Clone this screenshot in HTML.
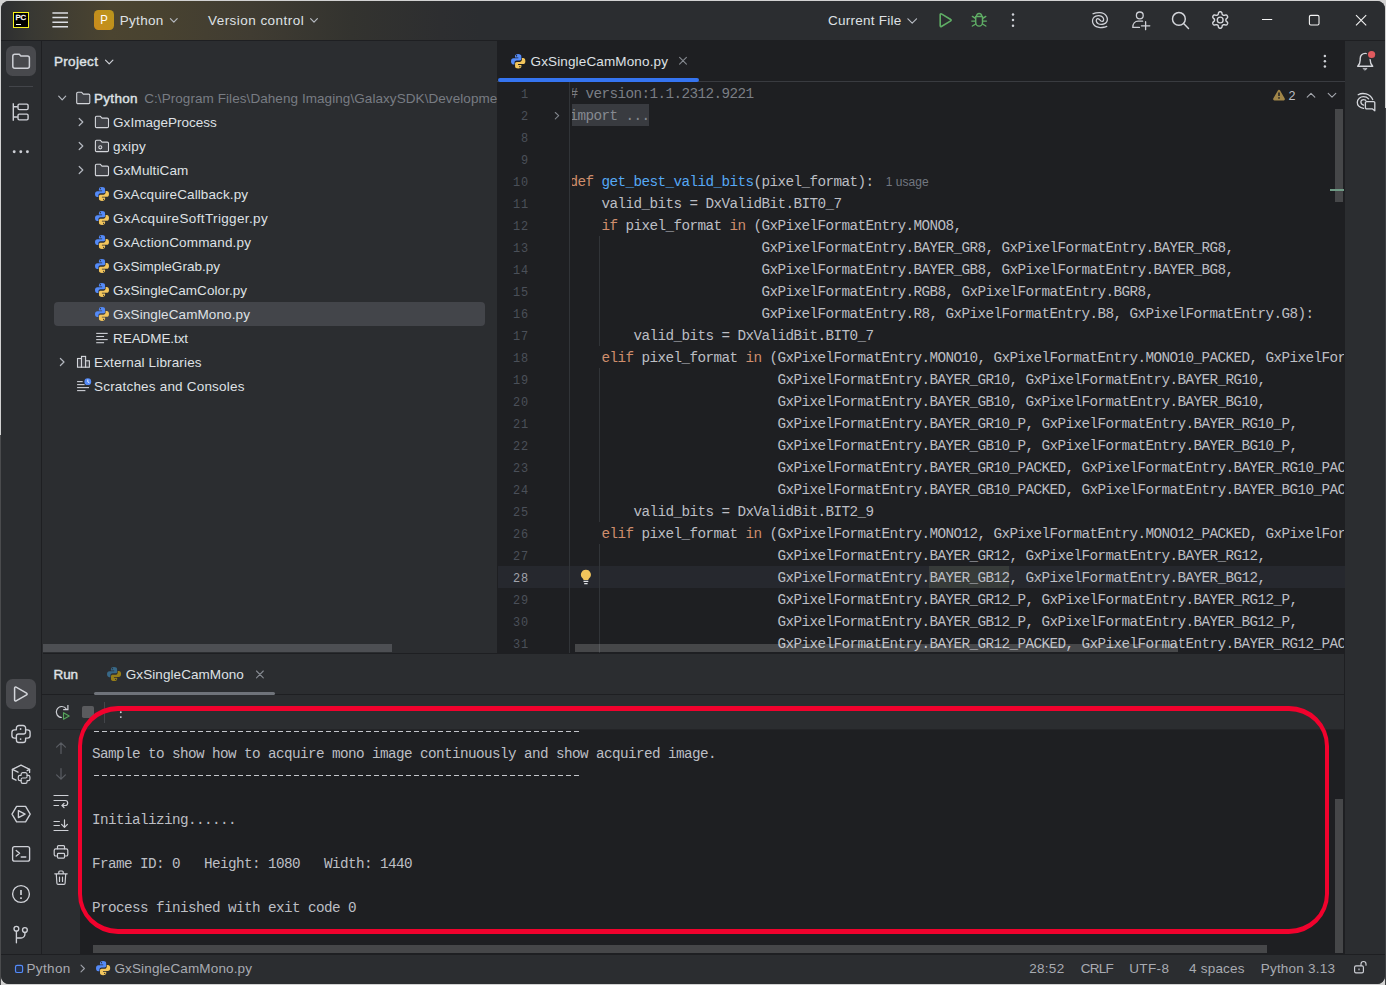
<!DOCTYPE html>
<html><head><meta charset="utf-8">
<style>
*{box-sizing:border-box;margin:0;padding:0}
html,body{width:1386px;height:985px;overflow:hidden;background:#d2d2d2;font-family:"Liberation Sans",sans-serif;}
#win{position:absolute;left:1px;top:1px;width:1384px;height:983px;background:#2b2d30;border-radius:8px;overflow:hidden;}
#win div,#win svg{position:absolute}
.t{color:#dfe1e5;font-size:13.5px;white-space:pre;line-height:16px;height:16px}
.ln{font-family:"Liberation Mono",monospace;font-size:14.3px;letter-spacing:-0.58px;white-space:pre;line-height:22px;height:22px;color:#bcbec4;left:0}
.ln span{position:static}
.k{color:#cf8e6d}.f{color:#56a8f5}.c{color:#7a7e85}
.num{font-family:"Liberation Mono",monospace;font-size:13.2px;letter-spacing:0.97px;line-height:22px;height:22px;color:#4b5059;text-align:right;width:40px;left:487.7px;transform:scaleX(0.9);transform-origin:right center}
svg{overflow:visible;fill:none;stroke:#ced0d6;stroke-width:1.2;stroke-linecap:round;stroke-linejoin:round}
.py .b{fill:#548af7;stroke:none}.py .y{fill:#f2c55c;stroke:none}
</style></head><body>
<div style="position:absolute;left:1385px;top:108px;width:1px;height:877px;background:#3e4043"></div>
<div style="position:absolute;left:0;top:435px;width:1px;height:550px;background:#4a4b4d"></div>
<div id="win">
<!-- TITLEBAR -->
<div style="left:0;top:0;width:1384px;height:39px;background:linear-gradient(90deg,#2d2e30 0px,#383833 30px,#403d32 60px,#4b4430 110px,#484230 160px,#403c32 250px,#33332f 350px,#2d2e30 440px,#2b2d30 480px)"></div>
<div style="left:0;top:39px;width:1384px;height:1px;background:#1e1f22"></div>
<div style="left:12px;top:11px;width:16.4px;height:16.4px;background:#000;border:1.2px solid #f7f21a"></div>
<div style="left:14.6px;top:13.2px;font-size:7.8px;font-weight:400;-webkit-text-stroke:0.35px #fff;color:#fff;line-height:8px;letter-spacing:-0.2px">PC</div>
<div style="left:15px;top:23px;width:5.2px;height:1.1px;background:#fff"></div>
<svg style="left:0;top:0;width:1px;height:1px" viewBox="1 1 1 1"><line x1="52.4" x2="68" y1="12.9" y2="12.9" stroke="#dcdee3" stroke-width="1.500" stroke-linecap="butt"/><line x1="52.4" x2="68" y1="17.5" y2="17.5" stroke="#dcdee3" stroke-width="1.500" stroke-linecap="butt"/><line x1="52.4" x2="68" y1="22.2" y2="22.2" stroke="#dcdee3" stroke-width="1.500" stroke-linecap="butt"/><line x1="52.4" x2="68" y1="26.8" y2="26.8" stroke="#dcdee3" stroke-width="1.500" stroke-linecap="butt"/></svg>
<div style="left:93px;top:9px;width:20px;height:20px;border-radius:4.5px;background:linear-gradient(50deg,#cb8b1c,#b9951c)"></div>
<div style="left:93px;top:9px;width:20px;height:20px;line-height:20.6px;text-align:center;font-size:13.2px;color:#fff;transform:scaleX(0.86)">P</div>
<svg style="left:0;top:0;width:1px;height:1px" viewBox="1 1 1 1"><polyline points="170.4,18.599999999999998 173.8,22.2 177.20000000000002,18.599999999999998" stroke="#b4b8bf" stroke-width="1.2"/></svg>
<svg style="left:0;top:0;width:1px;height:1px" viewBox="1 1 1 1"><polyline points="310.6,18.599999999999998 314,22.2 317.4,18.599999999999998" stroke="#b4b8bf" stroke-width="1.2"/></svg>
<svg style="left:0;top:0;width:1px;height:1px" viewBox="1 1 1 1"><polyline points="907.9000000000001,18.8 912.2,23.2 916.5,18.8" stroke="#b4b8bf" stroke-width="1.2"/></svg>
<svg style="left:0;top:0;width:1px;height:1px" viewBox="1 1 1 1"><path d="M940.2 14.6 v11.2 a0.8 0.8 0 0 0 1.2 0.7 l9.3 -5.6 a0.8 0.8 0 0 0 0 -1.4 l-9.3 -5.6 a0.8 0.8 0 0 0 -1.2 0.7 z" stroke="#5fad65" stroke-width="1.600"/></svg>
<svg style="left:0;top:0;width:1px;height:1px" viewBox="1 1 1 1"><g stroke="#5fad65" stroke-width="1.450"><path d="M976.500 16.300 a2.600 2.800 0 0 1 5.200 0"/><path d="M975.700 16.400 h6.800 v6.300 a3.400 3.400 0 0 1 -6.800 0 z"/><path d="M975.400 18.300 l-3 -1.900 M975.400 21.100 h-3.600 M975.700 24 l-3.300 2 M982.800 18.300 l3 -1.900 M982.800 21.100 h3.600 M982.500 24 l3.300 2"/></g></svg>
<svg style="left:0;top:0;width:1px;height:1px" viewBox="1 1 1 1"><circle cx="1013" cy="14.5" r="1.25" fill="#ced0d6" stroke="none"/><circle cx="1013" cy="20.1" r="1.25" fill="#ced0d6" stroke="none"/><circle cx="1013" cy="25.7" r="1.25" fill="#ced0d6" stroke="none"/></svg>
<svg style="left:0;top:0;width:1px;height:1px" viewBox="1 1 1 1"><path d="M1093.12 13.73 C1093.60 13.58 1094.94 13.06 1096.04 12.87 C1097.14 12.68 1098.44 12.48 1099.70 12.58 C1100.95 12.68 1102.50 12.95 1103.59 13.48 C1104.69 14.02 1105.65 14.88 1106.27 15.80 C1106.90 16.71 1107.33 17.91 1107.37 18.96 C1107.41 20.02 1107.07 21.30 1106.52 22.13 C1105.97 22.97 1104.98 23.57 1104.08 23.96 C1103.19 24.35 1102.13 24.49 1101.16 24.45 C1100.18 24.41 1099.01 24.14 1098.23 23.72 C1097.46 23.29 1096.83 22.56 1096.53 21.89 C1096.22 21.22 1096.22 20.22 1096.41 19.70 C1096.59 19.17 1097.20 18.82 1097.62 18.72 C1098.05 18.62 1098.58 18.86 1098.96 19.09 C1099.35 19.31 1099.61 19.74 1099.94 20.06 C1100.26 20.39 1100.53 20.81 1100.91 21.04 C1101.30 21.26 1101.83 21.50 1102.25 21.40 C1102.68 21.30 1103.29 20.95 1103.47 20.43 C1103.66 19.90 1103.66 18.90 1103.35 18.23 C1103.05 17.56 1102.42 16.83 1101.65 16.41 C1100.87 15.98 1099.70 15.72 1098.72 15.68 C1097.75 15.63 1096.69 15.78 1095.80 16.16 C1094.90 16.55 1093.91 17.16 1093.36 17.99 C1092.81 18.82 1092.47 20.10 1092.51 21.16 C1092.55 22.21 1092.97 23.41 1093.60 24.33 C1094.23 25.24 1095.19 26.10 1096.28 26.64 C1097.38 27.18 1098.92 27.44 1100.18 27.54 C1101.44 27.64 1102.74 27.44 1103.84 27.25 C1104.93 27.06 1106.27 26.54 1106.76 26.40" stroke="#ced0d6" stroke-width="1.300"/></svg>
<svg style="left:0;top:0;width:1px;height:1px" viewBox="1 1 1 1"><g stroke="#ced0d6" stroke-width="1.300"><circle cx="1139.800" cy="15.400" r="3.400"/><path d="M1139.400 27.400 h-6.600 c0 -3.600 2.200 -6.200 5.400 -6.200 h4.400 M1141.400 25.800 h8.400 M1145.600 21.700 v8"/></g></svg>
<svg style="left:0;top:0;width:1px;height:1px" viewBox="1 1 1 1"><g stroke="#d4d6db" stroke-width="1.450"><circle cx="1178.900" cy="18.900" r="6.400"/><path d="M1183.600 23.600 L1188.500 28.500"/></g></svg>
<svg style="left:0;top:0;width:1px;height:1px" viewBox="1 1 1 1"><path d="M1225.90 20.00 L1225.91 20.30 L1225.95 20.60 L1226.08 20.93 L1226.39 21.32 L1226.91 21.80 L1227.40 22.34 L1227.62 22.85 L1227.62 23.30 L1227.49 23.71 L1227.30 24.10 L1227.06 24.46 L1226.77 24.77 L1226.38 25.00 L1225.83 25.07 L1225.11 24.91 L1224.44 24.70 L1223.95 24.63 L1223.60 24.68 L1223.31 24.79 L1223.05 24.94 L1222.80 25.09 L1222.55 25.28 L1222.33 25.56 L1222.16 26.02 L1222.00 26.71 L1221.77 27.41 L1221.44 27.85 L1221.05 28.07 L1220.63 28.17 L1220.20 28.20 L1219.77 28.17 L1219.35 28.07 L1218.96 27.85 L1218.63 27.41 L1218.40 26.71 L1218.24 26.02 L1218.07 25.56 L1217.85 25.28 L1217.60 25.09 L1217.35 24.94 L1217.09 24.79 L1216.80 24.68 L1216.45 24.63 L1215.96 24.70 L1215.29 24.91 L1214.57 25.07 L1214.02 25.00 L1213.63 24.77 L1213.34 24.46 L1213.10 24.10 L1212.91 23.71 L1212.78 23.30 L1212.78 22.85 L1213.00 22.34 L1213.49 21.80 L1214.01 21.32 L1214.32 20.93 L1214.45 20.60 L1214.49 20.30 L1214.50 20.00 L1214.49 19.70 L1214.45 19.40 L1214.32 19.07 L1214.01 18.68 L1213.49 18.20 L1213.00 17.66 L1212.78 17.15 L1212.78 16.70 L1212.91 16.29 L1213.10 15.90 L1213.34 15.54 L1213.63 15.23 L1214.02 15.00 L1214.57 14.93 L1215.29 15.09 L1215.96 15.30 L1216.45 15.37 L1216.80 15.32 L1217.09 15.21 L1217.35 15.06 L1217.60 14.91 L1217.85 14.72 L1218.07 14.44 L1218.24 13.98 L1218.40 13.29 L1218.63 12.59 L1218.96 12.15 L1219.35 11.93 L1219.77 11.83 L1220.20 11.80 L1220.63 11.83 L1221.05 11.93 L1221.44 12.15 L1221.77 12.59 L1222.00 13.29 L1222.16 13.98 L1222.33 14.44 L1222.55 14.72 L1222.80 14.91 L1223.05 15.06 L1223.31 15.21 L1223.60 15.32 L1223.95 15.37 L1224.44 15.30 L1225.11 15.09 L1225.83 14.93 L1226.38 15.00 L1226.77 15.23 L1227.06 15.54 L1227.30 15.90 L1227.49 16.29 L1227.62 16.70 L1227.62 17.15 L1227.40 17.66 L1226.91 18.20 L1226.39 18.68 L1226.08 19.07 L1225.95 19.40 L1225.91 19.70 Z" stroke="#d4d6db" stroke-width="1.450" stroke-linejoin="round"/><circle cx="1220.2" cy="20" r="2.900" stroke="#d4d6db" stroke-width="1.400"/></svg>
<svg style="left:0;top:0;width:1px;height:1px" viewBox="1 1 1 1"><path d="M1262 19.500 h10.200" stroke="#f4f4f4" stroke-width="1.200" stroke-linecap="butt"/><rect x="1309.400" y="15.400" width="9.600" height="9.600" rx="1.400" stroke="#f4f4f4" stroke-width="1.100"/><path d="M1356 15.200 l10.200 10.200 M1366.200 15.200 l-10.200 10.200" stroke="#f4f4f4" stroke-width="1.100" stroke-linecap="butt"/></svg>
<!-- LEFT STRIPE -->
<div style="left:40px;top:40px;width:1px;height:913px;background:#1e1f22"></div>
<div style="left:5px;top:45px;width:30px;height:30px;border-radius:6.500px;background:#48494d"></div>
<svg style="left:0;top:0;width:1px;height:1px" viewBox="1 1 1 1"><path d="M12.8 56.2 a2 2 0 0 1 2 -2 h4.472 l1.6 1.8 h6.5280000000000005 a2 2 0 0 1 2 2 v8.2 a2 2 0 0 1 -2 2 h-12.600000000000001 a2 2 0 0 1 -2 -2 z" stroke="#ced0d6" stroke-width="1.5" fill="none"/></svg>
<div style="left:8px;top:85px;width:24px;height:1px;background:#43454a"></div>
<svg style="left:0;top:0;width:1px;height:1px" viewBox="1 1 1 1"><g stroke="#ced0d6" stroke-width="1.400"><path d="M13.300 103.200 V120.800 M13.300 106.800 H17.800 M13.300 117 H17.800" stroke-linecap="butt"/><rect x="18" y="104.100" width="10.100" height="5.500" rx="1.300"/><rect x="18" y="114.100" width="10.100" height="5.800" rx="1.300"/></g></svg>
<svg style="left:0;top:0;width:1px;height:1px" viewBox="1 1 1 1"><circle cx="14.2" cy="151.8" r="1.45" fill="#ced0d6" stroke="none"/><circle cx="20.8" cy="151.8" r="1.45" fill="#ced0d6" stroke="none"/><circle cx="27.4" cy="151.8" r="1.45" fill="#ced0d6" stroke="none"/></svg>
<div style="left:5px;top:678px;width:30px;height:30px;border-radius:6.500px;background:#494a4e"></div>
<svg style="left:0;top:0;width:1px;height:1px" viewBox="1 1 1 1"><path d="M14.600 688 v12 a1 1 0 0 0 1.500 0.860 l10.500 -6 a1 1 0 0 0 0 -1.720 l-10.500 -6 a1 1 0 0 0 -1.500 0.860 z" stroke="#d4d6db" stroke-width="1.500"/></svg>
<svg style="left:0;top:0;width:1px;height:1px" viewBox="1 1 1 1"><g stroke="#ced0d6" stroke-width="1.350"><path d="M19 725.500 h4 a2.600 2.600 0 0 1 2.600 2.600 v1.700 h1.900 a2.600 2.600 0 0 1 2.600 2.600 v3.200 a2.600 2.600 0 0 1 -2.600 2.600 h-1.900 v1.700 a2.600 2.600 0 0 1 -2.600 2.600 h-4 a2.600 2.600 0 0 1 -2.600 -2.600 v-1.700 h-1.900 a2.600 2.600 0 0 1 -2.600 -2.600 v-3.200 a2.600 2.600 0 0 1 2.600 -2.600 h1.900 v-1.700 a2.600 2.600 0 0 1 2.600 -2.600 z"/><path d="M25.600 729.800 v2.200 a2 2 0 0 1 -2 2 h-5.200 a2 2 0 0 0 -2 2 v2.200"/></g><circle cx="20.600" cy="729" r="0.900" fill="#ced0d6" stroke="none"/><circle cx="20.600" cy="739.100" r="0.900" fill="#ced0d6" stroke="none"/></svg>
<svg style="left:0;top:0;width:1px;height:1px" viewBox="1 1 1 1"><g stroke="#ced0d6" stroke-width="1.300"><path d="M29.600 772.400 v-3 l-8.600 -4.200 l-8.600 4.200 v9 l3.600 1.800"/><path d="M12.400 769.400 l5.600 2.800 M29.600 769.400 l-2.400 1.200"/></g><g stroke="#ced0d6" stroke-width="1.050" transform="translate(24.100,778.200) scale(0.640) translate(-21,-734.300)"><path d="M19 725.500 h4 a2.600 2.600 0 0 1 2.600 2.600 v1.700 h1.900 a2.600 2.600 0 0 1 2.600 2.600 v3.200 a2.600 2.600 0 0 1 -2.600 2.600 h-1.900 v1.700 a2.600 2.600 0 0 1 -2.600 2.600 h-4 a2.600 2.600 0 0 1 -2.600 -2.600 v-1.700 h-1.900 a2.600 2.600 0 0 1 -2.600 -2.600 v-3.200 a2.600 2.600 0 0 1 2.600 -2.600 h1.900 v-1.700 a2.600 2.600 0 0 1 2.600 -2.600 z" stroke-width="1.800"/><path d="M25.600 729.800 v2.200 a2 2 0 0 1 -2 2 h-5.200 a2 2 0 0 0 -2 2 v2.200" stroke-width="1.600"/></g></svg>
<svg style="left:0;top:0;width:1px;height:1px" viewBox="1 1 1 1"><g stroke="#ced0d6" stroke-width="1.350"><path d="M12 814.100 l4.600 -7.700 h9 l4.600 7.700 l-4.600 7.700 h-9 z"/><path d="M18.400 810.600 v7 l6.700 -3.500 z"/></g></svg>
<svg style="left:0;top:0;width:1px;height:1px" viewBox="1 1 1 1"><g stroke="#ced0d6" stroke-width="1.350"><rect x="12.600" y="846.600" width="17" height="14.600" rx="2"/><path d="M16.200 850.400 l3.400 2.800 l-3.400 2.800 M21.200 857 h4.600"/></g></svg>
<svg style="left:0;top:0;width:1px;height:1px" viewBox="1 1 1 1"><g stroke="#ced0d6" stroke-width="1.350"><circle cx="21" cy="894" r="8.400"/><path d="M21 890 v5" stroke-width="1.700" stroke-linecap="butt"/></g><rect x="20.150" y="897.300" width="1.700" height="1.700" fill="#ced0d6" stroke="none"/></svg>
<svg style="left:0;top:0;width:1px;height:1px" viewBox="1 1 1 1"><g stroke="#ced0d6" stroke-width="1.350"><circle cx="16.400" cy="928.700" r="2.400"/><circle cx="24.900" cy="930.100" r="2.400"/><path d="M16.400 931.100 v11.700 M24.900 932.500 v1.700 a3.800 3.800 0 0 1 -3.800 3.800 h-4.700"/></g></svg>
<!-- PROJECT PANEL -->
<div style="left:53px;top:301px;width:431px;height:24px;background:#43454a;border-radius:4px"></div>
<div style="left:42px;top:643px;width:349px;height:8px;background:#4d4f53"></div>
<svg style="left:0;top:0;width:1px;height:1px" viewBox="1 1 1 1"><polyline points="58.7,96.2 62.2,99.8 65.7,96.2" stroke="#b4b8bf" stroke-width="1.2"/></svg>
<svg style="left:0;top:0;width:1px;height:1px" viewBox="1 1 1 1"><path d="M76.7 93.5 a1.2 1.2 0 0 1 1.2 -1.2 h3.8019999999999996 l1.6 1.8 h5.297999999999999 a1.2 1.2 0 0 1 1.2 1.2 v7.1 a1.2 1.2 0 0 1 -1.2 1.2 h-10.7 a1.2 1.2 0 0 1 -1.2 -1.2 z" stroke="#d4d6db" stroke-width="1.1" fill="#3f4146"/></svg>
<svg style="left:0;top:0;width:1px;height:1px" viewBox="1 1 1 1"><polyline points="105.5,60.1 109.2,63.9 112.9,60.1" stroke="#ced0d6" stroke-width="1.2"/></svg>
<svg style="left:0;top:0;width:1px;height:1px" viewBox="1 1 1 1"><polyline points="79.2,118.5 82.8,122 79.2,125.5" stroke="#b4b8bf" stroke-width="1.2"/></svg>
<svg style="left:0;top:0;width:1px;height:1px" viewBox="1 1 1 1"><path d="M95.4 117.5 a1.2 1.2 0 0 1 1.2 -1.2 h3.8019999999999996 l1.6 1.8 h5.297999999999999 a1.2 1.2 0 0 1 1.2 1.2 v7.1 a1.2 1.2 0 0 1 -1.2 1.2 h-10.7 a1.2 1.2 0 0 1 -1.2 -1.2 z" stroke="#d4d6db" stroke-width="1.1" fill="#3f4146"/></svg>
<svg style="left:0;top:0;width:1px;height:1px" viewBox="1 1 1 1"><polyline points="79.2,142.5 82.8,146 79.2,149.5" stroke="#b4b8bf" stroke-width="1.2"/></svg>
<svg style="left:0;top:0;width:1px;height:1px" viewBox="1 1 1 1"><path d="M95.4 141.5 a1.2 1.2 0 0 1 1.2 -1.2 h3.8019999999999996 l1.6 1.8 h5.297999999999999 a1.2 1.2 0 0 1 1.2 1.2 v7.1 a1.2 1.2 0 0 1 -1.2 1.2 h-10.7 a1.2 1.2 0 0 1 -1.2 -1.2 z" stroke="#d4d6db" stroke-width="1.1" fill="#3f4146"/></svg>
<svg style="left:0;top:0;width:1px;height:1px" viewBox="1 1 1 1"><polyline points="79.2,166.5 82.8,170 79.2,173.5" stroke="#b4b8bf" stroke-width="1.2"/></svg>
<svg style="left:0;top:0;width:1px;height:1px" viewBox="1 1 1 1"><path d="M95.4 165.5 a1.2 1.2 0 0 1 1.2 -1.2 h3.8019999999999996 l1.6 1.8 h5.297999999999999 a1.2 1.2 0 0 1 1.2 1.2 v7.1 a1.2 1.2 0 0 1 -1.2 1.2 h-10.7 a1.2 1.2 0 0 1 -1.2 -1.2 z" stroke="#d4d6db" stroke-width="1.1" fill="#3f4146"/></svg>
<svg style="left:0;top:0;width:1px;height:1px" viewBox="1 1 1 1"><circle cx="100.300" cy="147.300" r="1.550" stroke="#d4d6db" stroke-width="1.050"/></svg>
<svg style="left:94.1px;top:185.9px;width:14px;height:14px" viewBox="0 0 14 14" ><g class="py" opacity="1"><path class="b" d="M6.95 0 C4.9 0 3.9 .9 3.9 2.2 V3.400 H7.100 V4.150 H2.400 C.9 4.150 0 5.200 0 7.050 C0 8.900 .9 10.100 2.200 10.100 H3.400 V8.400 C3.400 7.200 4.400 6.300 5.600 6.300 H8.400 C9.400 6.300 10.050 5.600 10.050 4.700 V2.200 C10.050 .9 9 0 6.950 0 Z" /><circle cx="5.400" cy="1.700" r=".62" fill="#2b2d30" stroke="none"/><path class="y" d="M 7.050 14.000 C 9.100 14.000 10.100 13.100 10.100 11.800 V 10.600 H 6.900 V 9.850 H 11.600 C 13.100 9.850 14.000 8.800 14.000 6.950 C 14.000 5.100 13.100 3.900 11.800 3.900 H 10.600 V 5.600 C 10.600 6.800 9.600 7.700 8.400 7.700 H 5.600 C 4.600 7.700 3.950 8.400 3.950 9.300 V 11.800 C 3.950 13.100 5.000 14.000 7.050 14.000 Z" /><circle cx="8.600" cy="12.300" r=".62" fill="#2b2d30" stroke="none"/></g></svg>
<svg style="left:94.1px;top:209.9px;width:14px;height:14px" viewBox="0 0 14 14" ><g class="py" opacity="1"><path class="b" d="M6.95 0 C4.9 0 3.9 .9 3.9 2.2 V3.400 H7.100 V4.150 H2.400 C.9 4.150 0 5.200 0 7.050 C0 8.900 .9 10.100 2.200 10.100 H3.400 V8.400 C3.400 7.200 4.400 6.300 5.600 6.300 H8.400 C9.400 6.300 10.050 5.600 10.050 4.700 V2.200 C10.050 .9 9 0 6.950 0 Z" /><circle cx="5.400" cy="1.700" r=".62" fill="#2b2d30" stroke="none"/><path class="y" d="M 7.050 14.000 C 9.100 14.000 10.100 13.100 10.100 11.800 V 10.600 H 6.900 V 9.850 H 11.600 C 13.100 9.850 14.000 8.800 14.000 6.950 C 14.000 5.100 13.100 3.900 11.800 3.900 H 10.600 V 5.600 C 10.600 6.800 9.600 7.700 8.400 7.700 H 5.600 C 4.600 7.700 3.950 8.400 3.950 9.300 V 11.800 C 3.950 13.100 5.000 14.000 7.050 14.000 Z" /><circle cx="8.600" cy="12.300" r=".62" fill="#2b2d30" stroke="none"/></g></svg>
<svg style="left:94.1px;top:233.9px;width:14px;height:14px" viewBox="0 0 14 14" ><g class="py" opacity="1"><path class="b" d="M6.95 0 C4.9 0 3.9 .9 3.9 2.2 V3.400 H7.100 V4.150 H2.400 C.9 4.150 0 5.200 0 7.050 C0 8.900 .9 10.100 2.200 10.100 H3.400 V8.400 C3.400 7.200 4.400 6.300 5.600 6.300 H8.400 C9.400 6.300 10.050 5.600 10.050 4.700 V2.200 C10.050 .9 9 0 6.950 0 Z" /><circle cx="5.400" cy="1.700" r=".62" fill="#2b2d30" stroke="none"/><path class="y" d="M 7.050 14.000 C 9.100 14.000 10.100 13.100 10.100 11.800 V 10.600 H 6.900 V 9.850 H 11.600 C 13.100 9.850 14.000 8.800 14.000 6.950 C 14.000 5.100 13.100 3.900 11.800 3.900 H 10.600 V 5.600 C 10.600 6.800 9.600 7.700 8.400 7.700 H 5.600 C 4.600 7.700 3.950 8.400 3.950 9.300 V 11.800 C 3.950 13.100 5.000 14.000 7.050 14.000 Z" /><circle cx="8.600" cy="12.300" r=".62" fill="#2b2d30" stroke="none"/></g></svg>
<svg style="left:94.1px;top:257.9px;width:14px;height:14px" viewBox="0 0 14 14" ><g class="py" opacity="1"><path class="b" d="M6.95 0 C4.9 0 3.9 .9 3.9 2.2 V3.400 H7.100 V4.150 H2.400 C.9 4.150 0 5.200 0 7.050 C0 8.900 .9 10.100 2.200 10.100 H3.400 V8.400 C3.400 7.200 4.400 6.300 5.600 6.300 H8.400 C9.400 6.300 10.050 5.600 10.050 4.700 V2.200 C10.050 .9 9 0 6.950 0 Z" /><circle cx="5.400" cy="1.700" r=".62" fill="#2b2d30" stroke="none"/><path class="y" d="M 7.050 14.000 C 9.100 14.000 10.100 13.100 10.100 11.800 V 10.600 H 6.900 V 9.850 H 11.600 C 13.100 9.850 14.000 8.800 14.000 6.950 C 14.000 5.100 13.100 3.900 11.800 3.900 H 10.600 V 5.600 C 10.600 6.800 9.600 7.700 8.400 7.700 H 5.600 C 4.600 7.700 3.950 8.400 3.950 9.300 V 11.800 C 3.950 13.100 5.000 14.000 7.050 14.000 Z" /><circle cx="8.600" cy="12.300" r=".62" fill="#2b2d30" stroke="none"/></g></svg>
<svg style="left:94.1px;top:281.9px;width:14px;height:14px" viewBox="0 0 14 14" ><g class="py" opacity="1"><path class="b" d="M6.95 0 C4.9 0 3.9 .9 3.9 2.2 V3.400 H7.100 V4.150 H2.400 C.9 4.150 0 5.200 0 7.050 C0 8.900 .9 10.100 2.200 10.100 H3.400 V8.400 C3.400 7.200 4.400 6.300 5.600 6.300 H8.400 C9.400 6.300 10.050 5.600 10.050 4.700 V2.200 C10.050 .9 9 0 6.950 0 Z" /><circle cx="5.400" cy="1.700" r=".62" fill="#2b2d30" stroke="none"/><path class="y" d="M 7.050 14.000 C 9.100 14.000 10.100 13.100 10.100 11.800 V 10.600 H 6.900 V 9.850 H 11.600 C 13.100 9.850 14.000 8.800 14.000 6.950 C 14.000 5.100 13.100 3.900 11.800 3.900 H 10.600 V 5.600 C 10.600 6.800 9.600 7.700 8.400 7.700 H 5.600 C 4.600 7.700 3.950 8.400 3.950 9.300 V 11.800 C 3.950 13.100 5.000 14.000 7.050 14.000 Z" /><circle cx="8.600" cy="12.300" r=".62" fill="#2b2d30" stroke="none"/></g></svg>
<svg style="left:94.1px;top:305.9px;width:14px;height:14px" viewBox="0 0 14 14" ><g class="py" opacity="1"><path class="b" d="M6.95 0 C4.9 0 3.9 .9 3.9 2.2 V3.400 H7.100 V4.150 H2.400 C.9 4.150 0 5.200 0 7.050 C0 8.900 .9 10.100 2.200 10.100 H3.400 V8.400 C3.400 7.200 4.400 6.300 5.600 6.300 H8.400 C9.400 6.300 10.050 5.600 10.050 4.700 V2.200 C10.050 .9 9 0 6.950 0 Z" /><circle cx="5.400" cy="1.700" r=".62" fill="#2b2d30" stroke="none"/><path class="y" d="M 7.050 14.000 C 9.100 14.000 10.100 13.100 10.100 11.800 V 10.600 H 6.900 V 9.850 H 11.600 C 13.100 9.850 14.000 8.800 14.000 6.950 C 14.000 5.100 13.100 3.900 11.800 3.900 H 10.600 V 5.600 C 10.600 6.800 9.600 7.700 8.400 7.700 H 5.600 C 4.600 7.700 3.950 8.400 3.950 9.300 V 11.800 C 3.950 13.100 5.000 14.000 7.050 14.000 Z" /><circle cx="8.600" cy="12.300" r=".62" fill="#2b2d30" stroke="none"/></g></svg>
<svg style="left:0;top:0;width:1px;height:1px" viewBox="1 1 1 1"><path d="M96.200 333.4 h11.5" stroke="#ced0d6" stroke-width="1.100" stroke-linecap="butt"/><path d="M96.200 336.5 h7.9" stroke="#ced0d6" stroke-width="1.100" stroke-linecap="butt"/><path d="M96.200 339.6 h11.5" stroke="#ced0d6" stroke-width="1.100" stroke-linecap="butt"/><path d="M96.200 342.7 h7.9" stroke="#ced0d6" stroke-width="1.100" stroke-linecap="butt"/></svg>
<svg style="left:0;top:0;width:1px;height:1px" viewBox="1 1 1 1"><polyline points="60.400000000000006,358.5 64.0,362 60.400000000000006,365.5" stroke="#b4b8bf" stroke-width="1.2"/></svg>
<svg style="left:0;top:0;width:1px;height:1px" viewBox="1 1 1 1"><g stroke="#d4d6db" stroke-width="1.100" stroke-linejoin="miter" fill="#3f4146"><rect x="77.500" y="358.500" width="4" height="8.700"/><rect x="81.500" y="356.400" width="4.100" height="10.800"/><rect x="85.600" y="360.800" width="3.800" height="6.400"/></g></svg>
<svg style="left:0;top:0;width:1px;height:1px" viewBox="1 1 1 1"><path d="M77.100 381.6 h5.6" stroke="#ced0d6" stroke-width="1.100" stroke-linecap="butt"/><path d="M77.100 384.6 h7.5" stroke="#ced0d6" stroke-width="1.100" stroke-linecap="butt"/><path d="M77.100 387.6 h11.9" stroke="#ced0d6" stroke-width="1.100" stroke-linecap="butt"/><path d="M77.100 390.6 h8.3" stroke="#ced0d6" stroke-width="1.100" stroke-linecap="butt"/><circle cx="87.800" cy="381.700" r="3.400" fill="#548af7" stroke="none"/><path d="M87.800 379.900 v2 l1.300 0.800" stroke="#fff" stroke-width="0.800"/></svg>
<!-- EDITOR -->
<div id="editor" style="left:496px;top:40px;width:848px;height:612px;background:#1e1f22"></div>
<div style="left:496px;top:80px;width:848px;height:1px;background:#393b40"></div>
<div style="left:497px;top:77px;width:201px;height:4px;background:#3574f0;border-radius:2px"></div>
<div style="left:497px;top:565px;width:847px;height:22px;background:#26282e"></div>
<div style="left:568px;top:81px;width:1px;height:571px;background:#313438"></div>
<div class="num" style="top:82.7px">1</div>
<div class="num" style="top:104.7px">2</div>
<div class="num" style="top:126.7px">8</div>
<div class="num" style="top:148.7px">9</div>
<div class="num" style="top:170.7px">10</div>
<div class="num" style="top:192.7px">11</div>
<div class="num" style="top:214.7px">12</div>
<div class="num" style="top:236.7px">13</div>
<div class="num" style="top:258.7px">14</div>
<div class="num" style="top:280.7px">15</div>
<div class="num" style="top:302.7px">16</div>
<div class="num" style="top:324.7px">17</div>
<div class="num" style="top:346.7px">18</div>
<div class="num" style="top:368.7px">19</div>
<div class="num" style="top:390.7px">20</div>
<div class="num" style="top:412.7px">21</div>
<div class="num" style="top:434.7px">22</div>
<div class="num" style="top:456.7px">23</div>
<div class="num" style="top:478.7px">24</div>
<div class="num" style="top:500.7px">25</div>
<div class="num" style="top:522.7px">26</div>
<div class="num" style="top:544.7px">27</div>
<div class="num" style="top:566.7px;color:#a1a3ab">28</div>
<div class="num" style="top:588.7px">29</div>
<div class="num" style="top:610.7px">30</div>
<div class="num" style="top:632.7px">31</div>
<div id="code" style="left:571px;top:81px;width:772px;height:571px;overflow:hidden">
<div style="left:0;top:22px;width:77px;height:22px;background:#393b40"></div>
<div style="left:357px;top:484px;width:80px;height:22px;background:#373b39"></div>
<div class="ln" style="left:-2.5px;top:0px"><span style="position:relative;top:0.5px"><span class="c"># version:1.1.2312.9221</span></span></div>
<div class="ln" style="left:-2.5px;top:22px"><span style="position:relative;top:0.5px"><span style="color:#868a91">import ...</span></span></div>
<div class="ln" style="left:-2.5px;top:44px"><span style="position:relative;top:0.5px"></span></div>
<div class="ln" style="left:-2.5px;top:66px"><span style="position:relative;top:0.5px"></span></div>
<div class="ln" style="left:-2.5px;top:88px"><span style="position:relative;top:0.5px"><span class="k">def</span> <span class="f">get_best_valid_bits</span>(pixel_format):</span></div>
<div class="ln" style="left:-2.5px;top:110px"><span style="position:relative;top:0.5px">    valid_bits = DxValidBit.BIT0_7</span></div>
<div class="ln" style="left:-2.5px;top:132px"><span style="position:relative;top:0.5px">    <span class="k">if</span> pixel_format <span class="k">in</span> (GxPixelFormatEntry.MONO8,</span></div>
<div class="ln" style="left:-2.5px;top:154px"><span style="position:relative;top:0.5px">                        GxPixelFormatEntry.BAYER_GR8, GxPixelFormatEntry.BAYER_RG8,</span></div>
<div class="ln" style="left:-2.5px;top:176px"><span style="position:relative;top:0.5px">                        GxPixelFormatEntry.BAYER_GB8, GxPixelFormatEntry.BAYER_BG8,</span></div>
<div class="ln" style="left:-2.5px;top:198px"><span style="position:relative;top:0.5px">                        GxPixelFormatEntry.RGB8, GxPixelFormatEntry.BGR8,</span></div>
<div class="ln" style="left:-2.5px;top:220px"><span style="position:relative;top:0.5px">                        GxPixelFormatEntry.R8, GxPixelFormatEntry.B8, GxPixelFormatEntry.G8):</span></div>
<div class="ln" style="left:-2.5px;top:242px"><span style="position:relative;top:0.5px">        valid_bits = DxValidBit.BIT0_7</span></div>
<div class="ln" style="left:-2.5px;top:264px"><span style="position:relative;top:0.5px">    <span class="k">elif</span> pixel_format <span class="k">in</span> (GxPixelFormatEntry.MONO10, GxPixelFormatEntry.MONO10_PACKED, GxPixelFormatEntry.MONO10_P,</span></div>
<div class="ln" style="left:-2.5px;top:286px"><span style="position:relative;top:0.5px">                          GxPixelFormatEntry.BAYER_GR10, GxPixelFormatEntry.BAYER_RG10,</span></div>
<div class="ln" style="left:-2.5px;top:308px"><span style="position:relative;top:0.5px">                          GxPixelFormatEntry.BAYER_GB10, GxPixelFormatEntry.BAYER_BG10,</span></div>
<div class="ln" style="left:-2.5px;top:330px"><span style="position:relative;top:0.5px">                          GxPixelFormatEntry.BAYER_GR10_P, GxPixelFormatEntry.BAYER_RG10_P,</span></div>
<div class="ln" style="left:-2.5px;top:352px"><span style="position:relative;top:0.5px">                          GxPixelFormatEntry.BAYER_GB10_P, GxPixelFormatEntry.BAYER_BG10_P,</span></div>
<div class="ln" style="left:-2.5px;top:374px"><span style="position:relative;top:0.5px">                          GxPixelFormatEntry.BAYER_GR10_PACKED, GxPixelFormatEntry.BAYER_RG10_PACKED,</span></div>
<div class="ln" style="left:-2.5px;top:396px"><span style="position:relative;top:0.5px">                          GxPixelFormatEntry.BAYER_GB10_PACKED, GxPixelFormatEntry.BAYER_BG10_PACKED):</span></div>
<div class="ln" style="left:-2.5px;top:418px"><span style="position:relative;top:0.5px">        valid_bits = DxValidBit.BIT2_9</span></div>
<div class="ln" style="left:-2.5px;top:440px"><span style="position:relative;top:0.5px">    <span class="k">elif</span> pixel_format <span class="k">in</span> (GxPixelFormatEntry.MONO12, GxPixelFormatEntry.MONO12_PACKED, GxPixelFormatEntry.MONO12_P,</span></div>
<div class="ln" style="left:-2.5px;top:462px"><span style="position:relative;top:0.5px">                          GxPixelFormatEntry.BAYER_GR12, GxPixelFormatEntry.BAYER_RG12,</span></div>
<div class="ln" style="left:-2.5px;top:484px"><span style="position:relative;top:0.5px">                          GxPixelFormatEntry.BAYER_GB12, GxPixelFormatEntry.BAYER_BG12,</span></div>
<div class="ln" style="left:-2.5px;top:506px"><span style="position:relative;top:0.5px">                          GxPixelFormatEntry.BAYER_GR12_P, GxPixelFormatEntry.BAYER_RG12_P,</span></div>
<div class="ln" style="left:-2.5px;top:528px"><span style="position:relative;top:0.5px">                          GxPixelFormatEntry.BAYER_GB12_P, GxPixelFormatEntry.BAYER_BG12_P,</span></div>
<div class="ln" style="left:-2.5px;top:550px"><span style="position:relative;top:0.5px">                          GxPixelFormatEntry.BAYER_GR12_PACKED, GxPixelFormatEntry.BAYER_RG12_PACKED,</span></div>
<div style="left:27px;top:154px;width:1px;height:110px;background:#313438"></div>
<div style="left:27px;top:286px;width:1px;height:154px;background:#313438"></div>
<div style="left:27px;top:462px;width:1px;height:132px;background:#313438"></div>
</div>
<svg style="left:509.8px;top:52.8px;width:14.4px;height:14.4px" viewBox="0 0 14 14" ><g class="py" opacity="1"><path class="b" d="M6.95 0 C4.9 0 3.9 .9 3.9 2.2 V3.400 H7.100 V4.150 H2.400 C.9 4.150 0 5.200 0 7.050 C0 8.900 .9 10.100 2.200 10.100 H3.400 V8.400 C3.400 7.200 4.400 6.300 5.600 6.300 H8.400 C9.400 6.300 10.050 5.600 10.050 4.700 V2.200 C10.050 .9 9 0 6.950 0 Z" /><circle cx="5.400" cy="1.700" r=".62" fill="#1e1f22" stroke="none"/><path class="y" d="M 7.050 14.000 C 9.100 14.000 10.100 13.100 10.100 11.800 V 10.600 H 6.900 V 9.850 H 11.600 C 13.100 9.850 14.000 8.800 14.000 6.950 C 14.000 5.100 13.100 3.900 11.800 3.900 H 10.600 V 5.600 C 10.600 6.800 9.600 7.700 8.400 7.700 H 5.600 C 4.600 7.700 3.950 8.400 3.950 9.300 V 11.800 C 3.950 13.100 5.000 14.000 7.050 14.000 Z" /><circle cx="8.600" cy="12.300" r=".62" fill="#1e1f22" stroke="none"/></g></svg>
<svg style="left:0;top:0;width:1px;height:1px" viewBox="1 1 1 1"><path d="M679.600 57.400 l6.800 6.800 M686.400 57.400 l-6.800 6.800" stroke="#868a91" stroke-width="1.100"/></svg>
<svg style="left:0;top:0;width:1px;height:1px" viewBox="1 1 1 1"><circle cx="1324.9" cy="55.9" r="1.25" fill="#ced0d6" stroke="none"/><circle cx="1324.9" cy="61.2" r="1.25" fill="#ced0d6" stroke="none"/><circle cx="1324.9" cy="66.5" r="1.25" fill="#ced0d6" stroke="none"/></svg>
<svg style="left:0;top:0;width:1px;height:1px" viewBox="1 1 1 1"><polyline points="555.3,112.5 558.7,115.7 555.3,118.9" stroke="#7f838a" stroke-width="1.1"/></svg>
<svg style="left:0;top:0;width:1px;height:1px" viewBox="1 1 1 1"><path d="M1279 91.200 l4.600 7.900 h-9.200 z" fill="#a08548" stroke="#a08548" stroke-width="2.600" stroke-linejoin="round"/><path d="M1279 92.600 v3.400" stroke="#1e1f22" stroke-width="1.500" stroke-linecap="butt"/><rect x="1278.250" y="97.200" width="1.500" height="1.500" fill="#1e1f22" stroke="none"/></svg>
<svg style="left:0;top:0;width:1px;height:1px" viewBox="1 1 1 1"><polyline points="1307.2,97.10000000000001 1311,93.3 1314.8,97.10000000000001" stroke="#a4a7ae" stroke-width="1.1"/></svg>
<svg style="left:0;top:0;width:1px;height:1px" viewBox="1 1 1 1"><polyline points="1328.2,93.3 1332,97.10000000000001 1335.8,93.3" stroke="#a4a7ae" stroke-width="1.1"/></svg>
<svg style="left:0;top:0;width:1px;height:1px" viewBox="1 1 1 1"><path d="M585.900 569.700 a5 5 0 0 0 -3.100 8.900 q0.700 0.600 0.700 1.400 h4.800 q0 -0.800 0.700 -1.400 a5 5 0 0 0 -3.100 -8.900 z" fill="#f2c55c" stroke="none"/><path d="M583.500 581.400 h4.800 M584.200 583.600 h3.400" stroke="#dfe1e5" stroke-width="1.100" stroke-linecap="butt"/></svg>
<div style="left:1334px;top:108px;width:8px;height:93px;background:rgba(255,255,255,0.18)"></div>
<div style="left:1329px;top:188px;width:14px;height:2px;background:#6f9a85"></div>
<div style="left:574px;top:643px;width:603px;height:8px;background:rgba(255,255,255,0.18)"></div>
<!-- RUN PANEL -->
<div style="left:42px;top:652px;width:1301px;height:1px;background:#1e1f22"></div>
<div style="left:41px;top:693px;width:1303px;height:1px;background:#1e1f22"></div>
<div style="left:93px;top:691px;width:181px;height:3px;background:#6f737a;border-radius:1.5px"></div>
<div style="left:42px;top:728px;width:1301px;height:1px;background:#232427"></div>
<div id="console" style="left:79px;top:729px;width:1265px;height:224px;background:#1e1f22;overflow:hidden">
<div style="left:13.900px;top:1.0px;width:484.800px;height:1.300px;background:repeating-linear-gradient(90deg,#c4c6cc 0,#c4c6cc 4.800px,transparent 4.800px,transparent 8px)"></div>
<div class="ln" style="left:12px;top:12.5px">Sample to show how to acquire mono image continuously and show acquired image.</div>
<div style="left:13.900px;top:45.0px;width:484.800px;height:1.300px;background:repeating-linear-gradient(90deg,#c4c6cc 0,#c4c6cc 4.800px,transparent 4.800px,transparent 8px)"></div>
<div class="ln" style="left:12px;top:56.5px"></div>
<div class="ln" style="left:12px;top:78.5px">Initializing......</div>
<div class="ln" style="left:12px;top:100.5px"></div>
<div class="ln" style="left:12px;top:122.5px">Frame ID: 0   Height: 1080   Width: 1440</div>
<div class="ln" style="left:12px;top:144.5px"></div>
<div class="ln" style="left:12px;top:166.5px">Process finished with exit code 0</div>
</div>
<div style="left:92px;top:944px;width:1174px;height:8px;background:rgba(255,255,255,0.18)"></div>
<div style="left:1334px;top:798px;width:8px;height:154px;background:rgba(255,255,255,0.18)"></div>
<svg style="left:106px;top:665.8px;width:14.1px;height:14.1px" viewBox="0 0 14 14" ><g class="py" opacity="1"><path class="b" d="M6.95 0 C4.9 0 3.9 .9 3.9 2.2 V3.400 H7.100 V4.150 H2.400 C.9 4.150 0 5.200 0 7.050 C0 8.900 .9 10.100 2.200 10.100 H3.400 V8.400 C3.400 7.200 4.400 6.300 5.600 6.300 H8.400 C9.400 6.300 10.050 5.600 10.050 4.700 V2.200 C10.050 .9 9 0 6.950 0 Z" style="fill:#386887"/><circle cx="5.400" cy="1.700" r=".62" fill="#2b2d30" stroke="none"/><path class="y" d="M 7.050 14.000 C 9.100 14.000 10.100 13.100 10.100 11.800 V 10.600 H 6.900 V 9.850 H 11.600 C 13.100 9.850 14.000 8.800 14.000 6.950 C 14.000 5.100 13.100 3.900 11.800 3.900 H 10.600 V 5.600 C 10.600 6.800 9.600 7.700 8.400 7.700 H 5.600 C 4.600 7.700 3.950 8.400 3.950 9.300 V 11.800 C 3.950 13.100 5.000 14.000 7.050 14.000 Z" style="fill:#967e18"/><circle cx="8.600" cy="12.300" r=".62" fill="#2b2d30" stroke="none"/></g></svg>
<svg style="left:0;top:0;width:1px;height:1px" viewBox="1 1 1 1"><path d="M256.500 671 l6.800 6.800 M263.300 671 l-6.800 6.800" stroke="#868a91" stroke-width="1.100"/></svg>
<svg style="left:0;top:0;width:1px;height:1px" viewBox="1 1 1 1"><path d="M66.300 708.850 A5.500 5.500 0 1 0 61.800 717.500" stroke="#ced0d6" stroke-width="1.200" stroke-linecap="butt"/><path d="M67.900 705 V709.700 H63.200" stroke="#ced0d6" stroke-width="1.200" stroke-linecap="butt" stroke-linejoin="miter"/><path d="M63.500 712.700 v6.600 l5.700 -3.300 z" stroke="#57a55d" stroke-width="1.100" fill="#2b3a2f"/></svg>
<div style="left:81.100px;top:705.100px;width:11.800px;height:11.800px;border-radius:1.800px;background:#5a5b5e"></div>
<div style="left:103.200px;top:701px;width:1px;height:21px;background:#43454a"></div>
<svg style="left:0;top:0;width:1px;height:1px" viewBox="1 1 1 1"><circle cx="120.8" cy="707.5" r="0.95" fill="#ced0d6" stroke="none"/><circle cx="120.8" cy="712.3" r="0.95" fill="#ced0d6" stroke="none"/><circle cx="120.8" cy="717.1" r="0.95" fill="#ced0d6" stroke="none"/></svg>
<svg style="left:0;top:0;width:1px;height:1px" viewBox="1 1 1 1"><g stroke="#5a5d63" stroke-width="1.200"><path d="M61 753.400 v-10.600 M56.600 747.200 l4.400 -4.400 l4.400 4.400"/><path d="M61 768.600 v10.600 M56.600 774.800 l4.400 4.400 l4.400 -4.400"/></g></svg>
<svg style="left:0;top:0;width:1px;height:1px" viewBox="1 1 1 1"><g stroke="#ced0d6" stroke-width="1.200"><path d="M54 795.500 h14 M54 800.500 h11.200 a2.500 2.500 0 0 1 0 5 h-3 M54 805.500 h4.600"/><path d="M64 803.500 l-2 2 l2 2"/></g></svg>
<svg style="left:0;top:0;width:1px;height:1px" viewBox="1 1 1 1"><g stroke="#ced0d6" stroke-width="1.200"><path d="M54 821.500 h5.400 M54 825.500 h5.400 M54 830.500 h14 M64.500 819.800 v7.200 M61.600 824.400 l2.900 2.900 l2.900 -2.900"/></g></svg>
<svg style="left:0;top:0;width:1px;height:1px" viewBox="1 1 1 1"><g stroke="#ced0d6" stroke-width="1.200"><path d="M57.500 848.800 v-2.200 a1 1 0 0 1 1 -1 h5 a1 1 0 0 1 1 1 v2.200"/><rect x="54.200" y="848.800" width="13.600" height="7.200" rx="1.600"/><rect x="57.500" y="853.300" width="7" height="4.800" rx="0.800" fill="#2b2d30"/></g></svg>
<svg style="left:0;top:0;width:1px;height:1px" viewBox="1 1 1 1"><g stroke="#ced0d6" stroke-width="1.200"><path d="M54.800 873.800 h12.400 M58.800 873.500 v-1.500 a1 1 0 0 1 1 -1 h2.400 a1 1 0 0 1 1 1 v1.500 M56.300 874 l0.600 9.200 a1.200 1.200 0 0 0 1.200 1.100 h5.800 a1.200 1.200 0 0 0 1.200 -1.100 l0.600 -9.200 M59.500 877 v4.500 M62.500 877 v4.500"/></g></svg>
<!-- RIGHT STRIPE -->
<div style="left:1344px;top:40px;width:40px;height:913px;background:#2b2d30"></div>
<div style="left:1343px;top:652px;width:1px;height:301px;background:#1e1f22"></div>
<svg style="left:0;top:0;width:1px;height:1px" viewBox="1 1 1 1"><g stroke="#d4d6db" stroke-width="1.400"><path d="M1357.700 66.300 c1.700 -1.700 2.500 -3.500 2.500 -6.300 v-1.600 a5 5 0 0 1 10 0 v1.600 c0 2.800 0.800 4.600 2.500 6.300 z"/></g><path d="M1363.200 68.400 h4 l-2 1.700 z" fill="#ced0d6" stroke="#ced0d6" stroke-width="0.600"/><circle cx="1371.600" cy="54.500" r="4.900" fill="#2b2d30" stroke="none"/><circle cx="1371.600" cy="54.500" r="3.600" fill="#e05a5e" stroke="none"/></svg>
<svg style="left:0;top:0;width:1px;height:1px" viewBox="1 1 1 1"><g stroke="#d4d6db" stroke-width="1.300"><path d="M1358.200 94.700 C1362.500 92.400 1370.200 93.400 1372.700 99.600"/><path d="M1363.600 108.400 C1359.600 107.600 1357.200 105.200 1357.300 102.300 C1357.500 98.800 1360.400 96.700 1363.400 96.700 C1365.600 96.700 1367.400 97.500 1368.600 98.900"/><path d="M1363.600 105.200 C1361.800 104.600 1360.800 103.400 1360.900 101.900 C1361 100.400 1362.400 99.500 1363.900 99.600 C1364.700 99.600 1365.300 99.900 1365.800 100.400"/><path d="M1366.600 101.600 h7 a1.200 1.200 0 0 1 1.200 1.200 v8 l-2.600 -2 h-5.600 a1.200 1.200 0 0 1 -1.200 -1.200 v-4.800 a1.200 1.200 0 0 1 1.200 -1.200 z" fill="#2b2d30"/></g></svg>
<!-- STATUS BAR -->
<div style="left:0;top:953px;width:1384px;height:1px;background:#1e1f22"></div>
<div style="left:0;top:954px;width:1384px;height:29px;background:#2b2d30"></div>
<svg style="left:0;top:0;width:1px;height:1px" viewBox="1 1 1 1"><rect x="15.500" y="965.400" width="7.100" height="7.100" rx="1.600" stroke="#548af7" stroke-width="1.200" fill="#25324d"/></svg>
<svg style="left:0;top:0;width:1px;height:1px" viewBox="1 1 1 1"><polyline points="81.0,965.1 84.4,968.5 81.0,971.9" stroke="#9da0a8" stroke-width="1.1"/></svg>
<svg style="left:94.9px;top:960.1px;width:14.2px;height:14.2px" viewBox="0 0 14 14" ><g class="py" opacity="1"><path class="b" d="M6.95 0 C4.9 0 3.9 .9 3.9 2.2 V3.400 H7.100 V4.150 H2.400 C.9 4.150 0 5.200 0 7.050 C0 8.900 .9 10.100 2.200 10.100 H3.400 V8.400 C3.400 7.200 4.400 6.300 5.600 6.300 H8.400 C9.400 6.300 10.050 5.600 10.050 4.700 V2.200 C10.050 .9 9 0 6.950 0 Z" /><circle cx="5.400" cy="1.700" r=".62" fill="#2b2d30" stroke="none"/><path class="y" d="M 7.050 14.000 C 9.100 14.000 10.100 13.100 10.100 11.800 V 10.600 H 6.900 V 9.850 H 11.600 C 13.100 9.850 14.000 8.800 14.000 6.950 C 14.000 5.100 13.100 3.900 11.800 3.900 H 10.600 V 5.600 C 10.600 6.800 9.600 7.700 8.400 7.700 H 5.600 C 4.600 7.700 3.950 8.400 3.950 9.300 V 11.800 C 3.950 13.100 5.000 14.000 7.050 14.000 Z" /><circle cx="8.600" cy="12.300" r=".62" fill="#2b2d30" stroke="none"/></g></svg>
<svg style="left:0;top:0;width:1px;height:1px" viewBox="1 1 1 1"><g stroke="#ced0d6" stroke-width="1.150"><rect x="1354.600" y="965.800" width="8.800" height="7" rx="1.400"/><path d="M1361 965.600 v-1.600 a2.500 2.500 0 0 1 5 0 v1.200"/></g><rect x="1358.200" y="968.500" width="1.600" height="1.800" fill="#9da0a8" stroke="none"/></svg>
<div class="t" style="left:118.7px;top:11.6px;font-size:13.5px;font-weight:400;color:#dfe1e5;letter-spacing:0.311px">Python</div>
<div class="t" style="left:207.0px;top:11.6px;font-size:13.5px;font-weight:400;color:#dfe1e5;letter-spacing:0.452px">Version control</div>
<div class="t" style="left:827.1px;top:11.6px;font-size:13.5px;font-weight:400;color:#dfe1e5;letter-spacing:0.247px">Current File</div>
<div class="t" style="left:53.0px;top:52.6px;font-size:13.5px;font-weight:400;color:#dfe1e5;letter-spacing:0.310px;-webkit-text-stroke:0.42px #dfe1e5">Project</div>
<div class="t" style="left:93.0px;top:89.6px;font-size:13.5px;font-weight:400;color:#dfe1e5;letter-spacing:0.295px;-webkit-text-stroke:0.42px #dfe1e5">Python</div>
<div class="t" style="left:112.1px;top:113.6px;font-size:13.5px;font-weight:400;color:#dfe1e5;letter-spacing:0.018px">GxImageProcess</div>
<div class="t" style="left:112.1px;top:137.6px;font-size:13.5px;font-weight:400;color:#dfe1e5;letter-spacing:0.297px">gxipy</div>
<div class="t" style="left:112.1px;top:161.6px;font-size:13.5px;font-weight:400;color:#dfe1e5;letter-spacing:0.103px">GxMultiCam</div>
<div class="t" style="left:112.1px;top:185.6px;font-size:13.5px;font-weight:400;color:#dfe1e5;letter-spacing:0.114px">GxAcquireCallback.py</div>
<div class="t" style="left:112.1px;top:209.6px;font-size:13.5px;font-weight:400;color:#dfe1e5;letter-spacing:0.367px">GxAcquireSoftTrigger.py</div>
<div class="t" style="left:112.1px;top:233.6px;font-size:13.5px;font-weight:400;color:#dfe1e5;letter-spacing:0.163px">GxActionCommand.py</div>
<div class="t" style="left:112.1px;top:257.6px;font-size:13.5px;font-weight:400;color:#dfe1e5;letter-spacing:0.030px">GxSimpleGrab.py</div>
<div class="t" style="left:112.1px;top:281.6px;font-size:13.5px;font-weight:400;color:#dfe1e5;letter-spacing:0.068px">GxSingleCamColor.py</div>
<div class="t" style="left:112.1px;top:305.6px;font-size:13.5px;font-weight:400;color:#dfe1e5;letter-spacing:0.102px">GxSingleCamMono.py</div>
<div class="t" style="left:112.1px;top:329.6px;font-size:13.5px;font-weight:400;color:#dfe1e5;letter-spacing:-0.087px">README.txt</div>
<div class="t" style="left:93.0px;top:353.6px;font-size:13.5px;font-weight:400;color:#dfe1e5;letter-spacing:0.147px">External Libraries</div>
<div class="t" style="left:93.0px;top:377.6px;font-size:13.5px;font-weight:400;color:#dfe1e5;letter-spacing:0.193px">Scratches and Consoles</div>
<div class="t" style="left:529.5px;top:52.6px;font-size:13.5px;font-weight:400;color:#dfe1e5;letter-spacing:0.141px">GxSingleCamMono.py</div>
<div class="t" style="left:52.6px;top:666.1px;font-size:13.5px;font-weight:400;color:#dfe1e5;letter-spacing:-0.122px;-webkit-text-stroke:0.42px #dfe1e5">Run</div>
<div class="t" style="left:124.8px;top:666.1px;font-size:13.5px;font-weight:400;color:#dfe1e5;letter-spacing:0.069px">GxSingleCamMono</div>
<div class="t" style="left:25.5px;top:960.1px;font-size:13.5px;font-weight:400;color:#a8abb2;letter-spacing:0.361px">Python</div>
<div class="t" style="left:113.4px;top:960.1px;font-size:13.5px;font-weight:400;color:#a8abb2;letter-spacing:0.152px">GxSingleCamMono.py</div>
<div class="t" style="left:1028.2px;top:960.1px;font-size:13.5px;font-weight:400;color:#a8abb2;letter-spacing:0.301px">28:52</div>
<div class="t" style="left:1079.8px;top:960.1px;font-size:13.5px;font-weight:400;color:#a8abb2;letter-spacing:-0.791px">CRLF</div>
<div class="t" style="left:1128.2px;top:960.1px;font-size:13.5px;font-weight:400;color:#a8abb2;letter-spacing:0.370px">UTF-8</div>
<div class="t" style="left:1188.1px;top:960.1px;font-size:13.5px;font-weight:400;color:#a8abb2;letter-spacing:0.194px">4 spaces</div>
<div class="t" style="left:1259.7px;top:960.1px;font-size:13.5px;font-weight:400;color:#a8abb2;letter-spacing:0.222px">Python 3.13</div>
<div class="t" style="left:143.2px;top:89.6px;font-size:13.5px;font-weight:400;color:#787c83;letter-spacing:0.069px">C:\Program Files\Daheng Imaging\GalaxySDK\Developme</div>
<div class="t" style="left:884.8px;top:173.1px;font-size:12px;font-weight:400;color:#727780;letter-spacing:0.014px">1 usage</div>
<div class="t" style="left:1287.5px;top:86.6px;font-size:12.5px;font-weight:400;color:#bcbec4;letter-spacing:0.447px">2</div>
<!-- ANNOTATION -->
<div style="left:77.1px;top:704.9px;width:1251.1px;height:228.4px;border:solid #f1022d;border-width:5px 4.1px 5px 4.6px;border-radius:40px"></div>
</div>
</body></html>
